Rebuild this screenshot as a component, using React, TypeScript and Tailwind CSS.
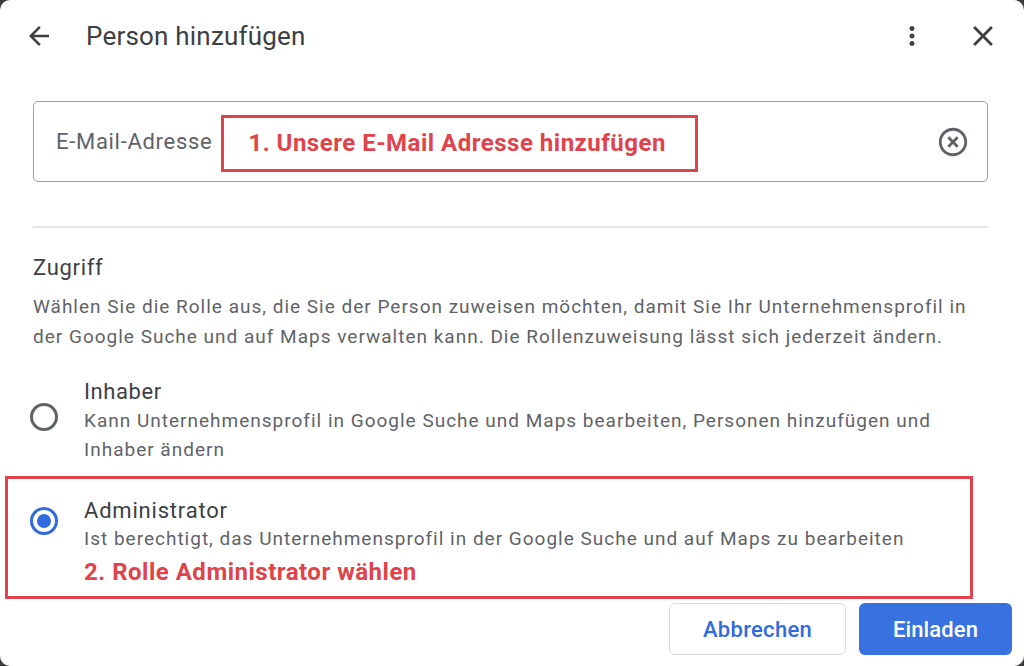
import React from "react";

function BackArrow() {
  return (
    <svg width="30" height="30" viewBox="0 0 24 24" fill="#3c4043">
      <path d="M20 11H7.83l5.59-5.59L12 4l-8 8 8 8 1.41-1.41L7.83 13H20v-2z" />
    </svg>
  );
}

function MoreVert() {
  return (
    <svg width="30" height="30" viewBox="0 0 24 24" fill="#3c4043">
      <path d="M12 8c1.1 0 2-.9 2-2s-.9-2-2-2-2 .9-2 2 .9 2 2 2zm0 2c-1.1 0-2 .9-2 2s.9 2 2 2 2-.9 2-2-.9-2-2-2zm0 6c-1.1 0-2 .9-2 2s.9 2 2 2 2-.9 2-2-.9-2-2-2z" />
    </svg>
  );
}

function CloseIcon() {
  return (
    <svg width="34" height="34" viewBox="0 0 24 24" fill="#3c4043">
      <path d="M19 6.41 17.59 5 12 10.59 6.41 5 5 6.41 10.59 12 5 17.59 6.41 19 12 13.41 17.59 19 19 17.59 13.41 12z" />
    </svg>
  );
}

function ClearIcon() {
  return (
    <svg width="34" height="34" viewBox="0 0 24 24" fill="#5f6368">
      <path d="M14.59 8 12 10.59 9.41 8 8 9.41 10.59 12 8 14.59 9.41 16 12 13.41 14.59 16 16 14.59 13.41 12 16 9.41 14.59 8zM12 2C6.47 2 2 6.47 2 12s4.47 10 10 10 10-4.47 10-10S17.53 2 12 2zm0 18c-4.41 0-8-3.59-8-8s3.59-8 8-8 8 3.59 8 8-3.59 8-8 8z" />
    </svg>
  );
}

function Radio({ checked }: { checked: boolean }) {
  return checked ? (
    <span className="flex h-[28px] w-[28px] items-center justify-center rounded-full border-[3px] border-[#2f6bdc]">
      <span className="h-[14px] w-[14px] rounded-full bg-[#2f6bdc]" />
    </span>
  ) : (
    <span className="block h-[28px] w-[28px] rounded-full border-[3px] border-[#5f6368]" />
  );
}

export default function App() {
  return (
    <div
      className="h-[666px] w-[1024px] overflow-hidden bg-[#3c3c3c]"
      style={{ fontFamily: "Roboto, 'Noto Sans', Arial, sans-serif" }}
    >
      <div className="flex h-full w-full flex-col rounded-[10px] bg-white">
        {/* header */}
        <div className="flex h-[72px] items-center pl-[24px] pr-[24px]">
          <BackArrow />
          <h1 className="ml-[32px] text-[26px] font-normal tracking-[0.2px] text-[#3c4043]">Person hinzufügen</h1>
          <div className="ml-auto flex items-center gap-[39px]">
            <MoreVert />
            <CloseIcon />
          </div>
        </div>

        <div className="pl-[33px] pr-[36px]">
          {/* email field */}
          <div className="mt-[29px] flex h-[81px] items-center rounded-[5px] border border-[#9aa0a6] pl-[22px] pr-[17px]">
            <span className="text-[22px] tracking-[0.7px] text-[#5f6368]">E-Mail-Adresse</span>
            <div className="ml-[9px] mt-[3px] flex h-[57px] w-[477px] items-center border-[3px] border-[#e0434b] pl-[24px]">
              <span className="text-[24px] font-bold tracking-[0.5px] text-[#e0434b]">
                1. Unsere E-Mail Adresse hinzufügen
              </span>
            </div>
            <div className="ml-auto">
              <ClearIcon />
            </div>
          </div>

          <div className="mt-[44px] h-[2px] bg-[#e4e4e4]" />

          {/* access section */}
          <div className="mt-[25px] text-[22px] leading-[30px] tracking-[0.7px] text-[#3c4043]">Zugriff</div>
          <div className="mt-[9px] text-[19px] leading-[30px] tracking-[1px] text-[#5f6368]">
            <div className="whitespace-nowrap">
              Wählen Sie die Rolle aus, die Sie der Person zuweisen möchten, damit Sie Ihr Unternehmensprofil in
            </div>
            <div className="whitespace-nowrap">
              der Google Suche und auf Maps verwalten kann. Die Rollenzuweisung lässt sich jederzeit ändern.
            </div>
          </div>
        </div>

        {/* roles */}
        <div className="mt-[26px] flex items-start pl-[30px]">
          <div className="mt-[25px]">
            <Radio checked={false} />
          </div>
          <div className="ml-[26px]">
            <div className="text-[22px] leading-[28px] tracking-[0.6px] text-[#3c4043]">Inhaber</div>
            <div className="text-[19px] leading-[29px] tracking-[1px] text-[#5f6368]">
              <div className="whitespace-nowrap">
                Kann Unternehmensprofil in Google Suche und Maps bearbeiten, Personen hinzufügen und
              </div>
              <div className="whitespace-nowrap">Inhaber ändern</div>
            </div>
          </div>
        </div>

        <div className="ml-[5px] mt-[12px] w-[968px] border-[3px] border-[#e0434b] pb-[9px] pl-[22px] pt-[18px]">
          <div className="flex items-start">
            <div className="mt-[10px]">
              <Radio checked={true} />
            </div>
            <div className="ml-[26px]">
              <div className="text-[22px] leading-[28px] tracking-[0.8px] text-[#3c4043]">Administrator</div>
              <div className="whitespace-nowrap text-[19px] leading-[28px] tracking-[1px] text-[#5f6368]">
                Ist berechtigt, das Unternehmensprofil in der Google Suche und auf Maps zu bearbeiten
              </div>
              <div className="mt-[4px] text-[24px] font-bold leading-[30px] tracking-[0.5px] text-[#e0434b]">
                2. Rolle Administrator wählen
              </div>
            </div>
          </div>
        </div>

        {/* actions */}
        <div className="mt-[4px] flex justify-end gap-[13px] pr-[12px]">
          <button className="h-[52px] w-[177px] rounded-[6px] border border-[#dadce0] bg-white text-[22px] font-medium tracking-[0.3px] text-[#2f6bdc]">
            Abbrechen
          </button>
          <button className="h-[52px] w-[153px] rounded-[6px] bg-[#3871e0] text-[22px] font-medium tracking-[0.1px] text-white">
            Einladen
          </button>
        </div>
      </div>
    </div>
  );
}
